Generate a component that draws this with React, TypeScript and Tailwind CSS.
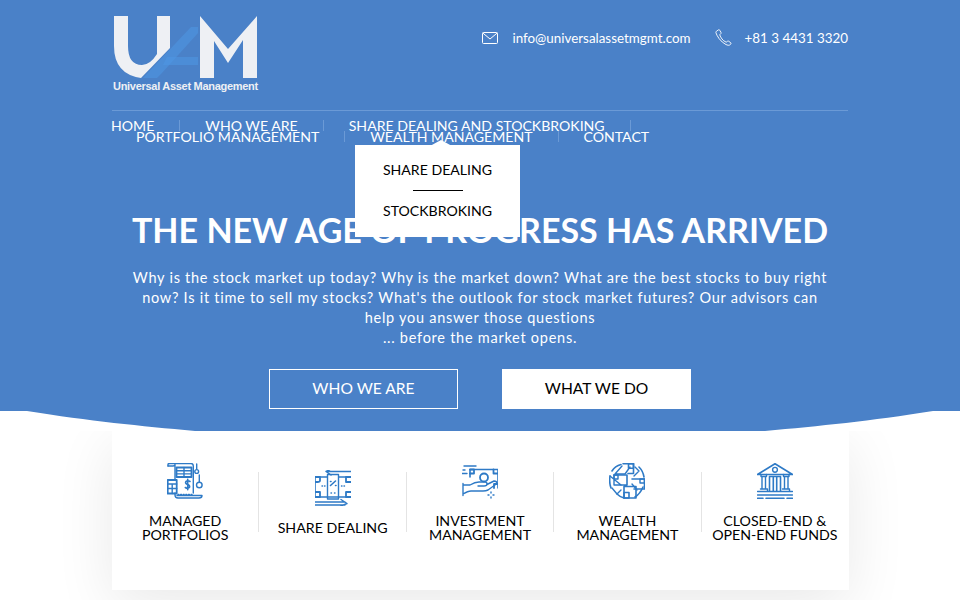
import React from "react";

const S = { fill: "none", stroke: "#2e7ac6", strokeWidth: 1.4, strokeLinejoin: "round" as const, strokeLinecap: "round" as const };

function Icon1() {
  return (
    <svg width="36" height="36" viewBox="0 0 36 36" {...S}>
      <path d="M1 3V1.5Q1 .5 3 .5H24Q26.3 .5 26.3 3V30" />
      <path d="M1 3H6Q8 3 8 1.5V17M8 30V32Q8 35 11 35H32Q35 35 35 32.5H10" />
      <rect x="9.5" y="4.5" width="15" height="9.5" strokeWidth="1.8" />
      <path d="M9.5 7.7H24.5M9.5 10.9H24.5M17 4.5V14" />
      <rect x="0.7" y="17" width="9" height="13.5" strokeWidth="1.8" />
      <path d="M.7 21H9.7M.7 25.5H9.7M5.2 21V30.5" />
      <path d="M23 18.5Q21 17 19 18.3Q17.8 20.3 20 21.2Q23 22 22.6 24Q21 26.2 18.3 24.5M20.7 16.3V26.8" strokeWidth="1.6" />
      <path d="M29.7 1V6M32.3 12V19" />
      <circle cx="29.7" cy="8.5" r="1.9" />
      <circle cx="32.3" cy="22" r="2.8" />
      <path d="M11 31.5H26" strokeDasharray="1 1.6" />
    </svg>
  );
}

function Icon2() {
  return (
    <svg width="36" height="36" viewBox="0 0 36 36" {...S}>
      <path d="M36 1.5H12M16 -1L11 1.5L16 5" />
      <path d="M12 7H0V27H36M36 7H24" strokeWidth="1.6" />
      <rect x="12.5" y="4.5" width="11" height="24.5" />
      <path d="M0 7H5V10.5Q5 12 2.5 12H0M36 7H31V12H36M0 27H5V22H0M36 27H31V22H36" strokeWidth="1.8" />
      <path d="M15.5 15.5L20.5 11M15.5 11.5h.5M20.5 15.5h.5" strokeWidth="1.6" />
      <path d="M7 16h.5M9.5 16h.5M26.5 16h.5M29 16h.5M16 23h.5M19.5 23h.5" />
      <path d="M0 32H30M0 35H30M26 29.5L32 33.5L26 36" />
    </svg>
  );
}

function Icon3() {
  return (
    <svg width="36" height="36" viewBox="0 0 36 36" {...S}>
      <path d="M2 3H14M0 10.5H5M8 10.5H9M1 7H3" />
      <path d="M8 14V6.5H36V25" strokeWidth="1.6" />
      <path d="M8 6.5H12V10.5H8M31.5 6.5V10.5H36M36 21H32V25" strokeWidth="1.8" />
      <circle cx="22" cy="14.5" r="4" strokeWidth="1.8" />
      <path d="M1 20.5V32.5M1 22H8Q13 19 17 19H23Q25 19 25 21Q25 23 22 23H16M25 21.5L32 18Q35 18 35 20.5L26 27Q24 28 21 28H9Q6 28 1 31" />
      <path d="M29 29v1M29 34v1M26 32h1M31 32h1" />
    </svg>
  );
}

function Icon4() {
  return (
    <svg width="36" height="36" viewBox="0 0 36 36" {...S}>
      <path d="M12 1.5Q6 3 3 8M30 4Q34 8 35 14M1 13Q0 20 2 25M34 24Q31 31 26 34M8 31Q11 34 15 35" strokeWidth="1.6" />
      <path d="M14 .8L24.5 .5V10.5H19M5 12H18V22H12M23 16H35.5V26H25M15 23.5H27V35H15Z" strokeWidth="1.6" />
      <path d="M5 12V22H12L1 13M13 3L6 11H16L21 4M26 4L30 8L25 13M3 25L8 31L12 27M28 27L23 21" />
      <rect x="19.5" y=".8" width="5" height="4.5" strokeWidth="1.6" />
      <rect x="15" y="29.5" width="5" height="5.5" strokeWidth="1.6" />
      <rect x="5" y="12" width="4" height="4" />
      <rect x="31" y="16" width="4.5" height="4" />
    </svg>
  );
}

function Icon5() {
  return (
    <svg width="36" height="36" viewBox="0 0 36 36" {...S}>
      <path d="M.5 11.5L18 .7L35.5 11.5H.5Z" strokeWidth="1.6" />
      <circle cx="18" cy="6.8" r="2.4" />
      <path d="M4 11.5V13.5H9.5V11.5M26.5 11.5V13.5H32V11.5M5 13.5V26M8.5 13.5V26M27.5 13.5V26M31 13.5V26M3.5 26H10.5V28M25.5 26H32.5V28" />
      <path d="M12.5 13.5H23.5V28M12.5 13.5V28M16.3 13.5V28M19.7 13.5V28" strokeWidth="1.6" />
      <path d="M.5 28.5H35.5M.5 32H35.5M.5 35.3H6M9 35.3H27M30 35.3H35.5" strokeWidth="1.5" />
    </svg>
  );
}

function Logo() {
  return (
    <div className="flex flex-col w-[146px] ml-px">
      <svg width="146" height="63" viewBox="0 0 146 63" className="block">
        <path d="M30 62L78 11H85V17L48 58L44 62Z" fill="#4f97e4" opacity="0.55" />
        <path d="M54 41H85V49H50Z" fill="#4f97e4" opacity="0.55" />
        <path d="M1 0H15V30Q15 49 29 49Q37 49 44 38V0H57V32L28 62Q1 58 1 30Z" fill="#eef0f4" />
        <path d="M87 62V0L115 33L144 0V62H130V24L115 47L101 25V62Z" fill="#eef0f4" />
      </svg>
      <div className="font-['Liberation_Sans',sans-serif] font-bold text-[11px] leading-[14px] text-[#eef0f4] whitespace-nowrap tracking-[-0.29px]">
        Universal Asset Management
      </div>
    </div>
  );
}

const navItems = ["HOME", "WHO WE ARE", "SHARE DEALING AND STOCKBROKING", "PORTFOLIO MANAGEMENT", "WEALTH MANAGEMENT", "CONTACT"];

function Feature({ icon, lines, last }: { icon: React.ReactNode; lines: string[]; last?: boolean }) {
  return (
    <div className={`flex-1 h-[60px] flex flex-col items-center justify-center ${last ? "" : "border-r border-[#e4e4e4]"}`}>
      <div className="shrink-0 w-9 h-9 mb-[15px]">{icon}</div>
      <div className="shrink-0 text-center text-[14.2px] leading-[14px] text-black whitespace-nowrap">
        {lines.map((l) => (
          <div key={l}>{l}</div>
        ))}
      </div>
    </div>
  );
}

export default function App() {
  return (
    <div className="relative w-[960px] h-[600px] overflow-hidden bg-white font-['Lato',sans-serif]">
      <header className="relative h-[431px] bg-[#4a81c8] text-white">
        <svg className="absolute left-0 bottom-0" width="960" height="20" viewBox="0 0 960 20">
          <path d="M0 0H27C90 10 140 15 195 20H765C820 15 870 10 933 0H960V20H0Z" fill="#fff" />
        </svg>

        <div className="relative w-[736px] mx-auto pt-4">
          <div className="flex justify-between items-start h-[95px] border-b border-[#6b9ad6]">
            <Logo />
            <div className="flex items-center mt-[13px] text-[13.4px] leading-4">
              <svg width="16" height="12" viewBox="0 0 16 12" fill="none" stroke="#fff" strokeWidth="1" className="mr-[14px]">
                <rect x=".5" y=".5" width="15" height="11" rx="1" />
                <path d="M.8 1L8 7L15.2 1" />
              </svg>
              <span>info@universalassetmgmt.com</span>
              <svg width="17" height="17" viewBox="0 0 17 17" fill="none" stroke="#fff" strokeWidth=".9" className="ml-[24px] mr-[13px]">
                <path d="M1.5 2.2L3.6.8Q4.3.6 4.8 1.3L6 3.5Q6.3 4.2 5.8 4.7L4.7 5.8Q5.5 8 7 10T11.2 13.2L12.6 12.2Q13.2 11.9 13.8 12.3L15.8 13.8Q16.3 14.3 15.9 14.9L14.7 16Q13.5 16.8 11 15.6Q7 13.5 4 9.5Q1.5 6 .9 3.6Q.8 2.8 1.5 2.2Z" />
              </svg>
              <span>+81 3 4431 3320</span>
            </div>
          </div>

          <nav className="relative -ml-px flex flex-wrap w-[600px] mt-[9px] text-[14.1px] leading-[11px]">
            {navItems.map((t, i) => (
              <div
                key={t}
                className={`h-[11px] flex items-center whitespace-nowrap ${i === 0 ? "pr-[25px]" : "px-[25px]"} ${i === navItems.length - 1 ? "" : "border-r border-[#6b9ad6]"}`}
              >
                {t}
              </div>
            ))}
            <div className="absolute left-[244px] top-[25px] z-10 w-[165px] h-[92px] bg-white text-black flex flex-col items-center pt-[17px] text-[14.1px]">
              <div className="absolute -top-[5px] left-[75px] w-0 h-0 border-l-[11px] border-r-[11px] border-b-[6px] border-l-transparent border-r-transparent border-b-white" />
              <div className="leading-4">SHARE DEALING</div>
              <div className="w-[50px] h-px bg-black mt-[12px] mb-[12px]" />
              <div className="leading-4">STOCKBROKING</div>
            </div>
          </nav>

          <h1 className="mt-[69px] text-center text-[34px] leading-[38px] font-bold whitespace-nowrap">
            THE NEW AGE OF PROGRESS HAS ARRIVED
          </h1>
          <p className="w-[700px] mx-auto mt-[19px] text-center text-[14.5px] leading-5 tracking-[0.74px]">
            Why is the stock market up today? Why is the market down? What are the best stocks to buy right now? Is it time to sell my stocks? What's the outlook for stock market futures? Our advisors can help you answer those questions
            <br />
            ... before the market opens.
          </p>
          <div className="flex justify-center gap-[44px] mt-[21px]">
            <a className="w-[189px] h-10 flex items-center justify-center border border-white text-[15.6px]">WHO WE ARE</a>
            <a className="w-[189px] h-10 flex items-center justify-center bg-white text-black text-[15.6px]">WHAT WE DO</a>
          </div>
        </div>
      </header>

      <section className="w-[737px] h-[159px] ml-[112px] pb-[17px] pr-px bg-white flex items-center shadow-[0_15px_60px_rgba(0,0,0,0.09)]">
        <Feature icon={<Icon1 />} lines={["MANAGED", "PORTFOLIOS"]} />
        <Feature icon={<Icon2 />} lines={["SHARE DEALING"]} />
        <Feature icon={<Icon3 />} lines={["INVESTMENT", "MANAGEMENT"]} />
        <Feature icon={<Icon4 />} lines={["WEALTH", "MANAGEMENT"]} />
        <Feature icon={<Icon5 />} lines={["CLOSED-END &", "OPEN-END FUNDS"]} last />
      </section>
    </div>
  );
}
